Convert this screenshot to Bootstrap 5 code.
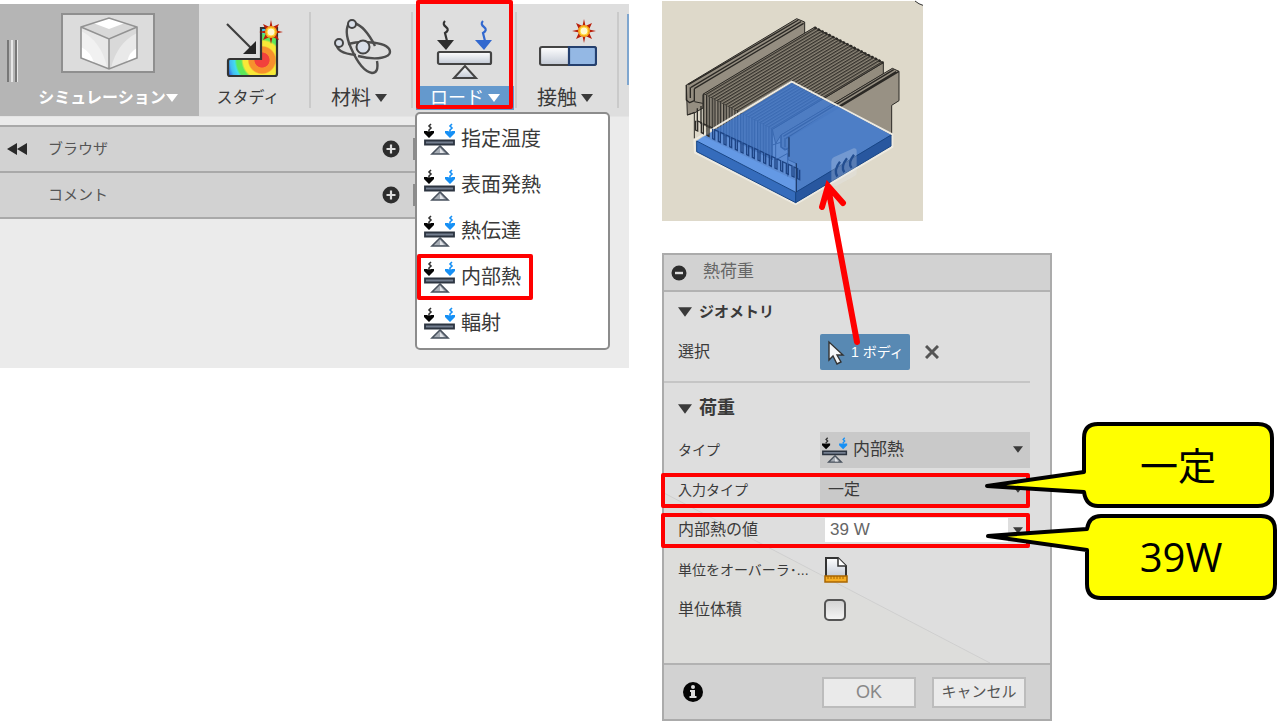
<!DOCTYPE html>
<html lang="ja">
<head>
<meta charset="utf-8">
<meta name="viewport" content="width=device-width, initial-scale=1">
<title>シミュレーション - 熱荷重</title>
<link href="https://cdn.jsdelivr.net/npm/bootstrap@5.3.0/dist/css/bootstrap.min.css" rel="stylesheet">
<style>
  body { background: #fff; color: #3a3a3a; font-family: "Liberation Sans", "Noto Sans CJK JP", sans-serif; font-size: 16px; line-height: 24px; }
  button { color: inherit; }
  svg { display: block; flex: none; }
  .workspace { background: #ebebeb; height: 364px; margin-top: 4px; }
  .toolstrip { background: #dedede; height: 113px; border-bottom: 1px solid #e4e4e4; }
  .tool { position: relative; width: 102px; padding: 8px 0 0; border: 0; background: none; display: flex; flex-direction: column; align-items: center; font-size: 20px; }
  .tool-holder { position: relative; }
  .tool-holder::after { content: ""; position: absolute; right: 0; top: 8px; height: 96px; width: 2px; background: #cacaca; }
  .tool-pic { height: 74px; display: flex; align-items: center; justify-content: center; }
  .tool-text { height: 24px; display: flex; align-items: center; gap: 4px; }
  .tool-mid .tool-pic { padding-bottom: 4px; }
  .tool-mid .tool-text { padding-right: 6px; }
  .tool-study { width: 112px; font-size: 16px; }
  .tool-study .tool-text { padding-right: 14px; }
  .tool-load { width: 104px; font-size: 18px; }
  .tool-load .tool-text { background: #6499cd; color: #fff; width: 98px; justify-content: center; }
  .sim-area { background: #b5b5b5; width: 199px; }
  .sim-area .tool { width: 182px; color: #fff; font-weight: 700; font-size: 16px; }
  .sim-area .tool-pic { padding-bottom: 12px; }
  .sim-area .tool-text { gap: 0; }
  .grip { width: 10px; height: 42px; border: solid #777; border-width: 0 2px; margin: 36px 0 0 7px; box-shadow: 1px 0 #e6e6e6; }
  .grip::after { content: ""; display: block; width: 2px; height: 42px; margin-left: 2px; background: #e6e6e6; }
  .next-tool { width: 2px; height: 71px; background: #7fa6cf; margin: 10px 0 0; }
  .mark-red { position: absolute; border: 4px solid #f00; border-radius: 2px; pointer-events: none; z-index: 5; }
  .load-mark { inset: -4px 4px 7px 3px; }
  .load-menu { position: absolute; top: 108px; left: 2px; width: 195px; border: 2px solid #8c8c8c; border-radius: 5px; background: #fff; padding: 2px 0; z-index: 3; }
  .load-menu button { position: relative; display: flex; align-items: center; gap: 5px; width: 100%; height: 46px; padding: 0 7px; border: 0; background: none; font-size: 20px; }
  .menu-mark { inset: 0 auto 0 0; width: 116px; }
  .side-list { width: 415px; margin-top: 8px; border-top: 2px solid #a9a9a9; }
  .side-line { height: 46px; background: #d2d2d2; border-bottom: 2px solid #a9a9a9; color: #555; font-size: 15px; padding-left: 7px; position: relative; }
  .side-line .fold { width: 41px; }
  .side-line .tick { width: 2px; height: 22px; margin-left: 13px; background: #8c8c8c; }
  .side-line button { border: 0; background: none; padding: 0; }

  .mid-col { width: 390px; margin-left: 33px; position: relative; flex: none; }
  .pointer { position: absolute; left: 154px; top: 180px; z-index: 6; }
  .dialog-box { border: 2px solid #ababab; background: #dedede; margin-top: 32px; }
  .dialog-top { height: 37px; background: #d2d2d2; border-bottom: 2px solid #b2b2b2; padding-left: 7px; gap: 16px; color: #666; font-size: 17px; font-weight: 400; }
  .dialog-main { position: relative; padding: 0 20px 33px 0; }
  .shade { position: absolute; left: 0; bottom: 0; }
  .section-head { height: 40px; padding-left: 14px; gap: 7px; font-weight: 700; font-size: 15px; margin: 0; position: relative; }
  .section-load { font-size: 18px; height: 42px; }
  .split { height: 2px; background: #c5c5c5; margin: 9px 0 5px; position: relative; }
  .field { position: relative; height: 40px; padding-left: 14px; display: flex; align-items: center; }
  .field > label, .field > .cap { width: 142px; flex: none; white-space: nowrap; }
  .kana { font-size: 14px; }
  .field-mark { inset: 3px 0 2px -3px; }
  .pick { width: 90px; height: 36px; border: 0; border-radius: 2px; background: #5889b3; color: #fff; padding: 0 0 0 8px; gap: 6px; font-size: 14px; }
  .clear-btn { border: 0; background: none; padding: 0 15px; }
  .drop { position: relative; flex: 1; height: 36px; background: #c9c9c9; }
  .drop select { appearance: none; width: 100%; height: 100%; border: 0; background: none; color: #3a3a3a; font-size: 16px; padding: 0 8px; }
  .drop .with-pic { padding-left: 33px; font-size: 17px; }
  .drop-low { height: 30px; }
  .drop .lead-pic { position: absolute; left: 2px; top: 5px; pointer-events: none; }
  .drop .caret { position: absolute; right: 7px; top: 50%; margin-top: -4px; pointer-events: none; }
  .watt { width: 183px; height: 24px; margin-left: 5px; border: 0; background: #fff; color: #666; padding: 0 5px; font-size: 17px; }
  .more { border: 0; background: none; padding: 0 0 0 5px; }
  .vol { appearance: none; width: 22px; height: 22px; margin-left: 4px; border: 2px solid #555; border-radius: 5px; background: linear-gradient(#d4d4d4, #f4f4f4); }
  .unit-btn { border: 0; background: none; padding: 0 0 0 4px; }
  .dialog-foot { height: 56px; background: #d2d2d2; border-top: 2px solid #b2b2b2; padding: 0 24px 0 19px; }
  .foot-btn { width: 94px; height: 31px; border: 2px solid #bcbcbc; background: #eaeaea; padding: 0; color: #555; font-size: 15px; }
  .foot-ok { color: #888; font-size: 18px; }

  .note-col { width: 225px; padding: 422px 0 0 30px; flex: none; }
  .note { position: relative; width: 192px; height: 86px; z-index: 7; color: #000; font: 38px/86px "Open Sans", "Noto Sans CJK JP", sans-serif; text-align: center; }
  .note svg { position: absolute; left: 0; top: 0; overflow: visible; }
  .note span { position: relative; }
  .note-watt { margin: 6px 0 0 3px; font-size: 40px; }
</style>
</head>
<body>
<svg width="0" height="0" class="position-absolute" aria-hidden="true">
  <defs>
    <linearGradient id="steel" x1="0" y1="0" x2="0" y2="1"><stop offset="0" stop-color="#fff"/><stop offset="1" stop-color="#c3cad6"/></linearGradient>
    <symbol id="heat" viewBox="0 0 32 32">
      <path d="M7 1L5 3l2 2-2 2v3" fill="none" stroke="#333" stroke-width="1.600"/>
      <path d="M28 1l-2 2 2 2-2 2v3" fill="none" stroke="#1690f5" stroke-width="1.600"/>
      <path d="M0 8h3l2 1 2-1h3v2l-5 5-5-5z" fill="#050505"/><path d="M21 8h3l2 1 2-1h3v2l-5 5-5-5z" fill="#1690f5"/>
      <path d="M1 17.500h29v4H1z" fill="#747f90" stroke="#2c3440" stroke-width="1.800"/>
      <path d="M16 23l-8 8h16z" fill="#a7adb5" stroke="#4a535f" stroke-width="1.600"/><path d="M16 25v5h4z" fill="#e4e6ea"/>
    </symbol>
    <symbol id="down" viewBox="0 0 12 8"><path d="M0 0h12L6 8z" fill="currentColor"/></symbol>
    <symbol id="plus" viewBox="0 0 18 18"><circle cx="9" cy="9" r="8.500" fill="#2d2d2d"/><path d="M9 4.500v9M4.500 9h9" stroke="#ddd" stroke-width="2.200"/></symbol>
    <symbol id="spark" viewBox="0 0 24 24">
      <path d="M12 0l1.500 7L20 4l-3 6.500 7 1.500-7 1.500L20 20l-6.500-3L12 24l-1.500-7L4 20l3-6.500L0 12l7-1.500L4 4l6.500 3z" fill="#b91d08"/>
      <circle cx="12" cy="12" r="6" fill="#f9a51a"/><circle cx="12" cy="12" r="4" fill="#fff8cf" stroke="#ffdc3c"/>
    </symbol>
  </defs>
</svg>

<main class="d-flex align-items-start">
  <section class="workspace flex-fill">
    <nav class="toolstrip d-flex align-items-stretch" aria-label="ツールバー">
      <div class="sim-area d-flex">
        <div class="grip"></div>
        <button class="tool" type="button">
          <span class="tool-pic">
            <svg width="94" height="60" viewBox="0 0 94 60">
              <path d="M1 1h92v58H1z" fill="#dcdcdc" stroke="#8f8f8f" stroke-width="2"/>
              <path d="M20 14L48 5l28 9-28 12z" fill="#d8d8d8"/><path d="M32 10l16-5 16 5-16 6z" fill="#fff"/>
              <path d="M20 14l28 12v30L20 45z" fill="#e7e7e7"/><path d="M20 18q20 10 26 36L20 45z" fill="#f1f1f1"/><path d="M20 34q10 5 13 16l-13-5z" fill="#fff"/>
              <path d="M76 14L48 26v30l28-11z" fill="#d9d9d9"/><path d="M76 20Q56 30 50 55l26-10z" fill="#e9e9e9"/><path d="M76 35q-8 4-10 14l10-4z" fill="#fff"/>
              <path d="M20 14L48 5l28 9v31L48 56 20 45zl28 12 28-12M48 26v30" fill="none" stroke="#929292" stroke-width="1.600"/>
            </svg>
          </span>
          <span class="tool-text">シミュレーション<svg width="12" height="8"><use href="#down"/></svg></span>
        </button>
      </div>
      <div class="tool-holder">
        <button class="tool tool-study" type="button">
          <span class="tool-pic">
            <svg width="58" height="62" viewBox="0 0 58 62">
              <defs><radialGradient id="field" gradientUnits="userSpaceOnUse" cx="36" cy="42" r="36"><stop offset=".2" stop-color="#f2413c"/><stop offset=".22" stop-color="#f7902d"/><stop offset=".36" stop-color="#f7902d"/><stop offset=".4" stop-color="#f8e837"/><stop offset=".52" stop-color="#f8e837"/><stop offset=".58" stop-color="#5ce85b"/><stop offset=".7" stop-color="#5ce85b"/><stop offset=".76" stop-color="#42dcf1"/><stop offset=".88" stop-color="#42bcf1"/><stop offset="1" stop-color="#315fe0"/></radialGradient></defs>
              <path d="M35 10h16v46q0 2-2 2H4q-2 0-2-2V43q0-2 2-2h31z" fill="url(#field)" stroke="#333" stroke-width="2.200"/>
              <path d="M1 6l25 25" stroke="#3d3d3d" stroke-width="2.200"/><path d="M30 23v13H17z" fill="#262626"/>
              <svg x="33" y="2" width="24" height="24"><use href="#spark"/></svg>
            </svg>
          </span>
          <span class="tool-text">スタディ</span>
        </button>
      </div>
      <div class="tool-holder">
        <button class="tool tool-mid" type="button">
          <span class="tool-pic">
            <svg width="60" height="58" viewBox="0 0 60 58">
              <g fill="none" stroke="#4d4d4d" stroke-width="2.400"><path d="M5 28Q3 38 24 40M16 29C30 25 58 27 58 37C58 42 46 46 26 41" transform="translate(0 -3)"/><path d="M18 4Q11 12 19 30Q29 53 40 55Q47 55 45 43M22 5Q33 8 43 28"/></g>
              <g fill="#d8dee8" stroke="#444" stroke-width="2"><circle cx="31" cy="29" r="6.500"/><circle cx="20" cy="6" r="4"/><circle cx="7" cy="25" r="4"/></g>
            </svg>
          </span>
          <span class="tool-text">材料 <svg width="12" height="8"><use href="#down"/></svg></span>
        </button>
      </div>
      <div class="tool-holder">
        <button class="tool tool-load" type="button" aria-expanded="true">
          <span class="tool-pic">
            <svg width="58" height="60" viewBox="0 0 58 60">
              <path d="M9 2q-3 3 1 6t-1 6l2 8" fill="none" stroke="#333" stroke-width="2.200"/><path d="M1 21h17l-8 10z" fill="#2d2d2d"/>
              <path d="M47 2q-3 3 1 6t-1 6l2 8" fill="none" stroke="#3168cf" stroke-width="2.200"/><path d="M39 21h17l-8 10z" fill="#3168cf"/>
              <rect x="2" y="33" width="53" height="12" rx="1.500" fill="url(#steel)" stroke="#444" stroke-width="2.200"/>
              <path d="M29 47L18 59h22z" fill="url(#steel)" stroke="#444" stroke-width="2"/>
            </svg>
          </span>
          <span class="tool-text">ロード<svg width="12" height="8"><use href="#down"/></svg></span>
        </button>
        <div class="mark-red load-mark"></div>
        <div class="load-menu" role="menu">
          <button type="button" role="menuitem"><svg width="32" height="32"><use href="#heat"/></svg>指定温度</button>
          <button type="button" role="menuitem"><svg width="32" height="32"><use href="#heat"/></svg>表面発熱</button>
          <button type="button" role="menuitem"><svg width="32" height="32"><use href="#heat"/></svg>熱伝達</button>
          <button type="button" role="menuitem"><svg width="32" height="32"><use href="#heat"/></svg>内部熱<span class="mark-red menu-mark"></span></button>
          <button type="button" role="menuitem"><svg width="32" height="32"><use href="#heat"/></svg>輻射</button>
        </div>
      </div>
      <div class="tool-holder">
        <button class="tool tool-mid" type="button">
          <span class="tool-pic">
            <svg width="58" height="58" viewBox="0 0 58 58">
              <rect x="1" y="29" width="56" height="18" rx="2" fill="url(#steel)" stroke="#444" stroke-width="2.200"/>
              <path d="M30 29h25q2 0 2 2v14q0 2-2 2H30z" fill="#94b8e4" stroke="#24406f" stroke-width="2.200"/>
              <svg x="33" y="1" width="24" height="24"><use href="#spark"/></svg>
            </svg>
          </span>
          <span class="tool-text">接触 <svg width="12" height="8"><use href="#down"/></svg></span>
        </button>
      </div>
      <div class="next-tool ms-auto"></div>
    </nav>
    <div class="side-list">
      <div class="side-line d-flex align-items-center">
        <button class="fold" type="button" aria-label="折りたたむ"><svg width="20" height="12" viewBox="0 0 20 12"><path d="M10 0v12L0 6zM20 0v12l-10-6z" fill="#2a2a2a"/></svg></button>
        <span>ブラウザ</span>
        <button class="ms-auto" type="button" aria-label="ブラウザを追加"><svg width="18" height="18"><use href="#plus"/></svg></button>
        <span class="tick"></span>
      </div>
      <div class="side-line d-flex align-items-center">
        <span class="fold"></span>
        <span>コメント</span>
        <button class="ms-auto" type="button" aria-label="コメントを追加"><svg width="18" height="18"><use href="#plus"/></svg></button>
        <span class="tick"></span>
      </div>
    </div>
  </section>

  <section class="mid-col">
    <svg width="261" height="221" viewBox="21 0 783 663" role="img" aria-label="ヒートシンク">
      <defs>
        <pattern id="fins" width="20" height="8.200" patternUnits="userSpaceOnUse" patternTransform="rotate(-31)"><path d="M0 0h20v8.200H0z" fill="#8d8678"/><path d="M0 0h20v4H0z" fill="#35322d"/></pattern>
        <pattern id="teeth" width="17" height="20" patternUnits="userSpaceOnUse"><path d="M0 0h17v20H0z" fill="#968f82"/><path d="M0 0h4v20H0zM8 0h4v20H8z" fill="#2e2c28"/></pattern>
      </defs>
      <path d="M21 3h783v660H21z" fill="#ded9ca"/>
      <path d="M780 3q12 10 24 13V3z" fill="#fff"/><path d="M780 3q12 10 24 13" fill="none" stroke="#333" stroke-width="3"/>
      <g stroke="#2b2925" stroke-width="3" stroke-linejoin="round">
        <path d="M94 255L425 56l24 10v36L170 272l-26 12v40l-24 14-23 7z" fill="#958e81"/>
        <path d="M100 254L430 60M108 262L438 65M118 266L446 70M94 255v45l10 8 14-6v-36M106 262v32" fill="none" stroke-width="4"/>
        <path d="M118 305l25 5M97 345l21-8v78" fill="none"/>
        <path d="M352 388L685 188v34L378 405l-16 26z" fill="#938c7e"/>
        <path d="M145 282L478 82l207 106-333 200z" fill="url(#fins)"/>
        <path d="M478 82l207 106" stroke-dasharray="7 5" stroke-width="7"/>
        <path d="M145 282l207 106v92L145 376z" fill="url(#teeth)" stroke="none"/>
        <path d="M145 282v94M352 388v92" fill="none"/>
        <path d="M127 325v42M138 318v54" fill="none" stroke-width="4"/>
        <path d="M378 405L712 205l20 9v88l-22 14v90L425 575v-84l-26-12v-29l-21-8z" fill="#989184"/>
        <path d="M385 409L716 209M393 415L723 215M402 412L732 214M378 405v36l12 9 12-7v-31M390 414v28" fill="none" stroke-width="4"/>
        <path d="M352 435l25-8M362 432v48l36-20v70" fill="none"/>
      </g>
      <path d="M118 420L410 245l302 158v38L422 612 120 458z" fill="none" stroke="#edeae1" stroke-width="6"/>
      <path d="M125 423L410 248l298 157-286 172z" fill="#3d79d5" fill-opacity=".8"/>
      <path d="M125 423l20-14 280 134v34z" fill="#67a0ee" fill-opacity=".65"/>
      <path d="M425 490V577L708 405 546 318 402 412v58z" fill="#4c7ec7" fill-opacity=".85"/>
      <path d="M122 362v28l6 3v-30l11 5v30l6 3v-30l11 5v30l6 3v-30l11 5" fill="none" stroke="#2e2c28" stroke-width="4"/>
      <path d="M173 386v30l6 3v-30l11 5v30l6 3v-30l11 5v30l6 3v-30l11 5v30l6 3v-30l11 5v30l6 3v-30l11 5v30l6 3v-30l11 5v30l6 3v-30l11 5v30l6 3v-30l11 5v30l6 3v-30l11 5v30l6 3v-30l11 5v30l6 3v-30l11 5v30l6 3v-30l11 5v30l6 3v-30l11 5v30l6 3v-30l11 5v30l6 3v-30l11 5v30l6 3v-30" fill="none" stroke="#1d4485" stroke-width="4"/>
      <path d="M125 423l297 154v31L125 455z" fill="#356cbc" stroke="#174688" stroke-width="3"/>
      <path d="M422 577l286-172v33L422 608z" fill="#28579f" stroke="#174688" stroke-width="3"/>
      <path d="M424 490v86M402 412v58" stroke="#1e3c6c" stroke-width="4"/>
      <path d="M536 472l60-27q9-1 9 8v67q0 6-7 9l-54 29q-15 3-15-11v-62q0-9 7-13z" fill="#e8edf4" fill-opacity=".25"/>
      <path d="M555 485q-20 25-8 45M576 475q-20 25-8 42M597 464q-20 25-7 40" fill="none" stroke="#234e91" stroke-width="7"/>
    </svg>

    <svg class="pointer" width="50" height="170" viewBox="0 0 50 170" aria-hidden="true"><path d="M41 162L12 7M6 27L12 6l15 17" fill="none" stroke="#f00" stroke-width="6" stroke-linecap="round"/></svg>

    <form class="dialog-box" onsubmit="return false">
      <h1 class="dialog-top d-flex align-items-center m-0"><svg width="16" height="16" viewBox="0 0 16 16"><circle cx="8" cy="8" r="7.500" fill="#2d2d2d"/><path d="M4 8h8" stroke="#ddd" stroke-width="2.400"/></svg>熱荷重</h1>
      <div class="dialog-main">
        <svg class="shade" width="326" height="170" viewBox="0 0 326 170" aria-hidden="true"><path d="M0 0l326 170H0z" fill="#dddddb"/><path d="M0 0l326 170" stroke="#cfcfcf"/></svg>
        <h2 class="section-head d-flex align-items-center"><svg width="14" height="10"><use href="#down"/></svg>ジオメトリ</h2>
        <div class="field">
          <span class="cap">選択</span>
          <button class="pick d-flex align-items-center" type="button"><svg width="17" height="25" viewBox="0 0 17 25"><path d="M1 2v18l4-4 4 8 4-2-4-7h6z" fill="#f4f6f8" stroke="#333" stroke-width="1.400"/></svg>1 ボディ</button>
          <button class="clear-btn" type="button" aria-label="選択を解除"><svg width="14" height="14" viewBox="0 0 14 14"><path d="M1 1l12 12M13 1L1 13" stroke="#555" stroke-width="3"/></svg></button>
        </div>
        <div class="split"></div>
        <h2 class="section-head section-load d-flex align-items-center"><svg width="14" height="10"><use href="#down"/></svg>荷重</h2>
        <div class="field">
          <label class="kana" for="kind">タイプ</label>
          <div class="drop"><svg class="lead-pic" width="26" height="26"><use href="#heat"/></svg><select id="kind" class="with-pic"><option>内部熱</option></select><svg class="caret" width="10" height="7"><use href="#down"/></svg></div>
        </div>
        <div class="field">
          <label class="kana" for="entry">入力タイプ</label>
          <div class="drop drop-low"><select id="entry"><option>一定</option></select><svg class="caret" width="10" height="7"><use href="#down"/></svg></div>
          <div class="mark-red field-mark"></div>
        </div>
        <div class="field">
          <label for="watt">内部熱の値</label>
          <input class="watt" id="watt" type="text" value="39 W">
          <button class="more" type="button" aria-label="単位を選ぶ"><svg width="10" height="7"><use href="#down"/></svg></button>
          <div class="mark-red field-mark"></div>
        </div>
        <div class="field">
          <span class="cap kana">単位をオーバーラ･...</span>
          <button class="unit-btn" type="button" aria-label="単位をオーバーライド"><svg width="24" height="26" viewBox="0 0 24 26"><path d="M2 20V1h12l8 8v11z" fill="url(#steel)" stroke="#333" stroke-width="2"/><path d="M14 1v8h8" fill="#fff" stroke="#333" stroke-width="1.500"/><path d="M1 19h22v6H1z" fill="#f5ad24" stroke="#a96600" stroke-width="1.500"/><path d="M4 19v3M7 19v3M10 19v3M13 19v3M16 19v3M19 19v3" stroke="#a96600"/></svg></button>
        </div>
        <div class="field">
          <label for="vol">単位体積</label>
          <input class="vol" id="vol" type="checkbox">
        </div>
      </div>
      <div class="dialog-foot d-flex align-items-center">
        <svg width="20" height="20" viewBox="0 0 20 20" role="img" aria-label="情報"><circle cx="10" cy="10" r="10" fill="#050505"/><circle cx="10" cy="5" r="2" fill="#ddd"/><path d="M7 8h5v6h1.500v2h-7v-2H8v-4H7z" fill="#ddd"/></svg>
        <button class="foot-btn foot-ok ms-auto" type="submit">OK</button>
        <button class="foot-btn ms-3" type="button">キャンセル</button>
      </div>
    </form>
  </section>

  <aside class="note-col">
    <div class="note"><svg width="192" height="86" viewBox="0 0 192 86" aria-hidden="true"><path d="M2 50V16Q2 2 16 2h160q14 0 14 14v54q0 14-14 14H16Q4 84 2 70l-97-6z" fill="#ff0"/><path d="M2 50V16Q2 2 16 2h160q14 0 14 14v54q0 14-14 14H16Q4 84 2 70l-97-6z" fill="none" stroke="#000" stroke-width="4" stroke-linejoin="round"/></svg><span>一定</span></div>
    <div class="note note-watt"><svg width="192" height="86" viewBox="0 0 192 86" aria-hidden="true"><path d="M2 15Q4 2 16 2h160q14 0 14 14v54q0 14-14 14H16Q2 84 2 70V36l-99-14z" fill="#ff0" stroke="#000" stroke-width="4" stroke-linejoin="round"/></svg><span>39W</span></div>
  </aside>
</main>
<script src="https://cdn.jsdelivr.net/npm/bootstrap@5.3.0/dist/js/bootstrap.bundle.min.js"></script>
</body>
</html>
